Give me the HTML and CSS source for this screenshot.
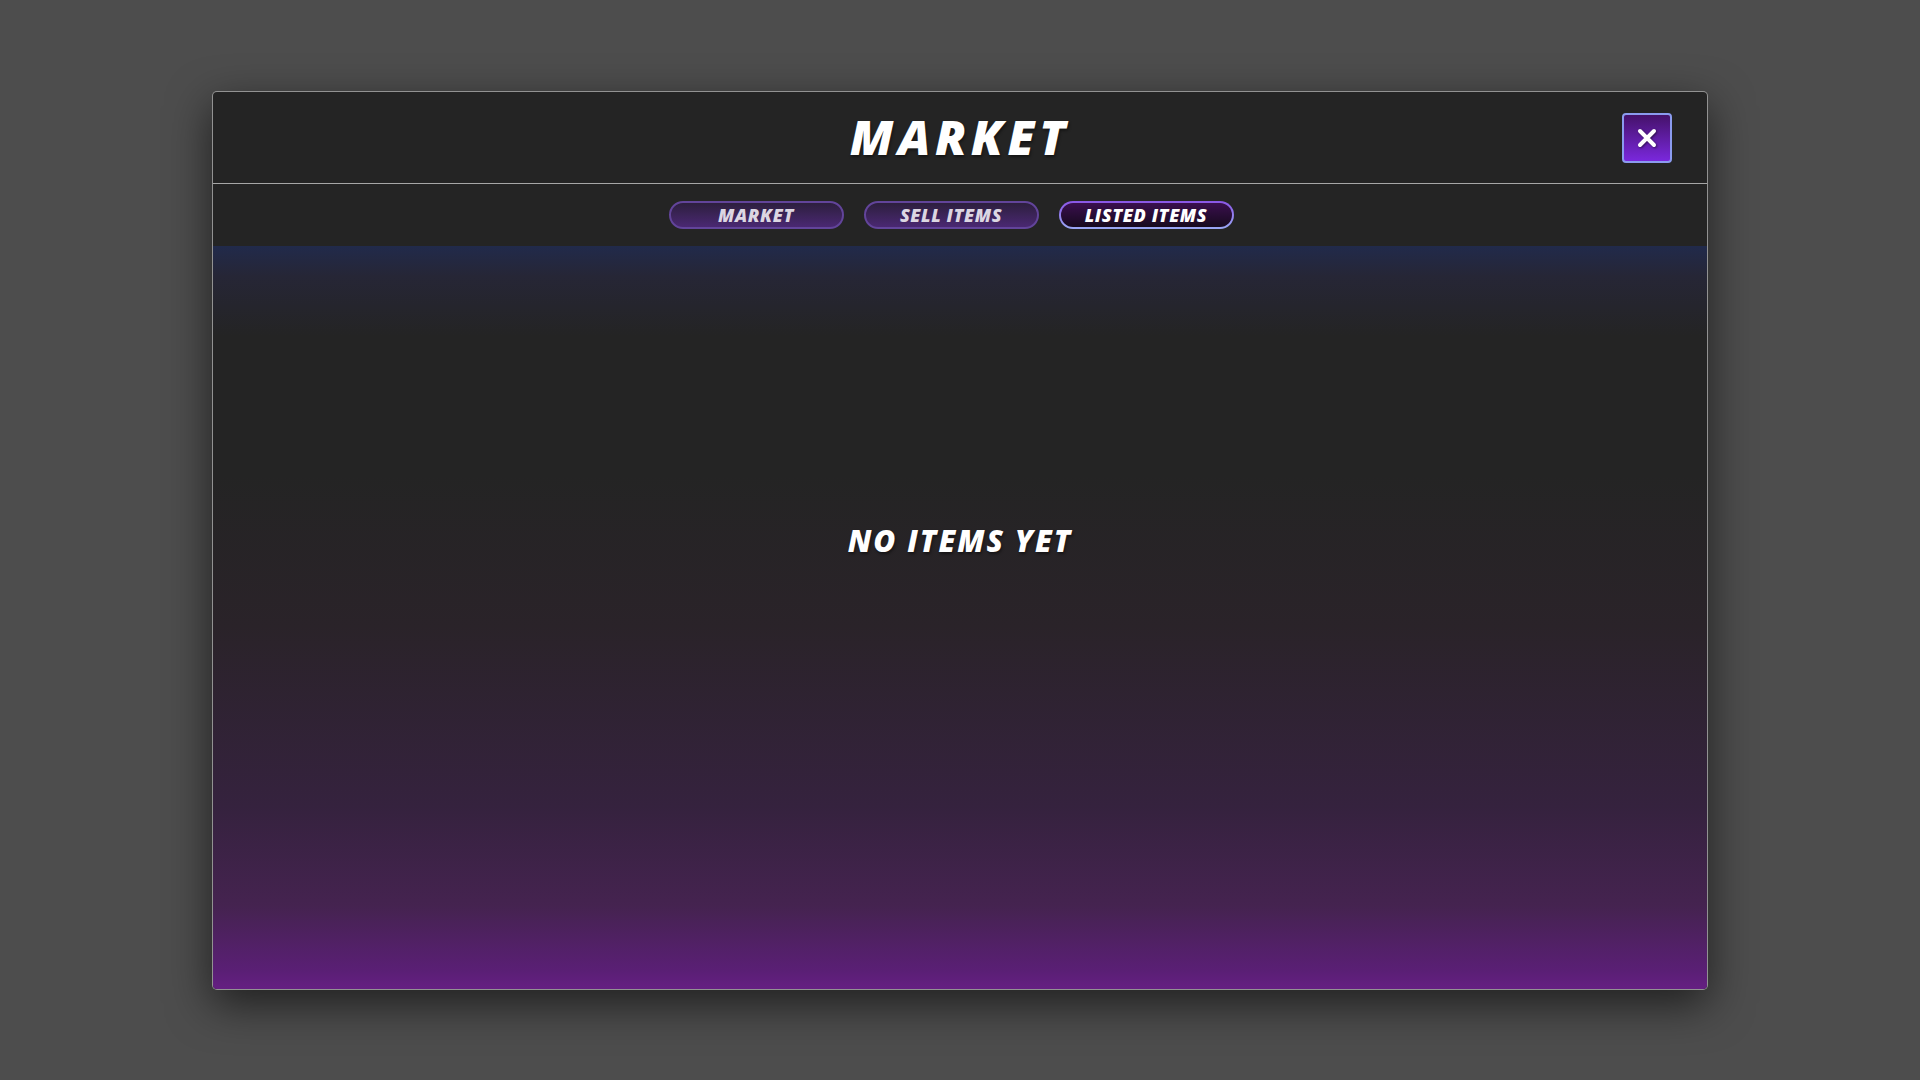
FILE: index.html
```html
<!DOCTYPE html>
<html lang="en">
<head>
<meta charset="utf-8">
<title>Market</title>
<link rel="stylesheet" href="styles.css">
</head>
<body>
<div class="modal">
  <header class="modal-header">
    <h1 class="title">MARKET</h1>
    <button class="close-btn" aria-label="Close">
      <svg width="20" height="20" viewBox="0 0 20 20"><path d="M3 3 L17 17 M17 3 L3 17" stroke="#fff" stroke-width="4" stroke-linecap="round"/></svg>
    </button>
  </header>
  <nav class="tabs">
    <button class="tab">MARKET</button>
    <button class="tab">SELL ITEMS</button>
    <button class="tab active">LISTED ITEMS</button>
  </nav>
  <main class="content">
    <p class="empty">NO ITEMS YET</p>
  </main>
</div>
</body>
</html>
```
FILE: styles.css
```css
* { box-sizing: border-box; }
html, body { margin: 0; padding: 0; }
body {
  width: 1920px;
  height: 1080px;
  background: #4d4d4d;
  display: flex;
  align-items: center;
  justify-content: center;
  font-family: "Open Sans", "DejaVu Sans", sans-serif;
}
.modal {
  width: 1496px;
  height: 899px;
  border: 1px solid rgba(255,255,255,0.5);
  border-radius: 5px;
  background: #242424;
  box-shadow: 0 14px 44px rgba(0,0,0,0.6);
  display: flex;
  flex-direction: column;
  overflow: hidden;
}
.modal-header {
  position: relative;
  height: 92px;
  flex: none;
  border-bottom: 1px solid rgba(255,255,255,0.6);
  display: flex;
  align-items: center;
  justify-content: center;
}
.title {
  margin: 0;
  color: #fff;
  font-size: 48px;
  font-weight: 800;
  font-style: italic;
  letter-spacing: 4.6px;
  line-height: 1;
  text-shadow: 1px 2px 3px rgba(0,0,0,0.45);
}
.close-btn {
  position: absolute;
  right: 35px;
  top: 21px;
  width: 50px;
  height: 50px;
  padding: 0;
  border: 2px solid #8b9bef;
  border-radius: 4px;
  background: linear-gradient(#45126a, #7a28dd);
  display: flex;
  align-items: center;
  justify-content: center;
  cursor: pointer;
}
.close-btn svg { filter: drop-shadow(1px 1px 1px rgba(0,0,0,0.5)); }
.tabs {
  height: 62px;
  flex: none;
  display: flex;
  align-items: center;
  justify-content: center;
  gap: 20px;
  padding-right: 18px;
}
.tab {
  width: 175px;
  height: 28px;
  padding: 0;
  border-radius: 14px;
  border: 2px solid #62449a;
  background: linear-gradient(#2d1f3e, #4a2872);
  color: #dcd6e2;
  font-family: "Open Sans", "DejaVu Sans", sans-serif;
  font-size: 18px;
  font-weight: 800;
  font-style: italic;
  letter-spacing: 0.6px;
  line-height: 1;
  cursor: pointer;
}
.tab.active {
  border: 2px solid transparent;
  background:
    linear-gradient(#3a0f4e, #170a1e) padding-box,
    linear-gradient(#8a55e6, #9aa8f4) border-box;
  color: #fff;
}
.content {
  flex: 1;
  display: flex;
  align-items: center;
  justify-content: center;
  padding-bottom: 152px;
  background: linear-gradient(180deg,
    #212a4b 0px,
    #262636 30px,
    #242424 90px,
    #242424 230px,
    #2a2329 380px,
    #35223e 560px,
    #452350 660px,
    #5a1f75 725px,
    #651f82 100%);
}
.empty {
  margin: 0;
  color: #fff;
  font-size: 30px;
  font-weight: 800;
  font-style: italic;
  letter-spacing: 2px;
  line-height: 1;
  text-shadow: 1px 2px 3px rgba(0,0,0,0.45);
}
```
